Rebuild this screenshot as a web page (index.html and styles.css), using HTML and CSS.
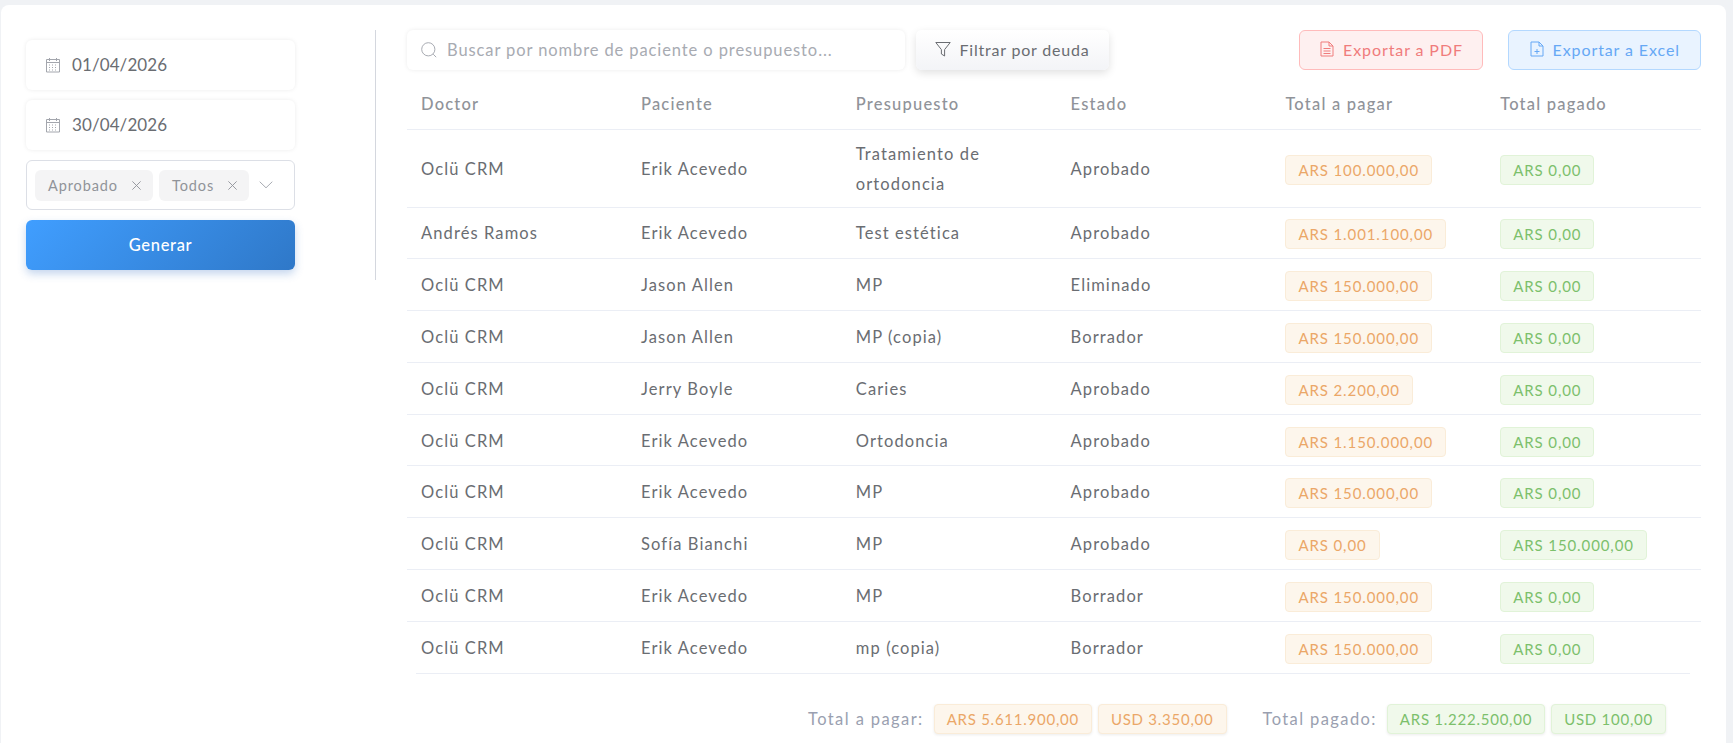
FILE: index.html
```html
<!DOCTYPE html>
<html lang="es">
<head>
    <meta charset="UTF-8">
    <meta name="viewport" content="width=device-width, initial-scale=1.0">
    <title>Reporte de presupuestos</title>
    <link rel="stylesheet" href="styles.css">
</head>
<body>

    <div class="card">
        <aside class="filters">
            <div class="date-input">
                <svg class="icon" viewBox="0 0 16 16"><path d="M1.5 2.5h13v12.5h-13zM1.5 5.5h13M4.5 1v3M11.5 1v3"/><path class="dots" d="M4 8h2M7 8h2M10 8h2M4 10.5h2M7 10.5h2M10 10.5h2M4 13h2M7 13h2M10 13h2"/></svg>
                <span>01/04/2026</span>
            </div>
            <div class="date-input">
                <svg class="icon" viewBox="0 0 16 16"><path d="M1.5 2.5h13v12.5h-13zM1.5 5.5h13M4.5 1v3M11.5 1v3"/><path class="dots" d="M4 8h2M7 8h2M10 8h2M4 10.5h2M7 10.5h2M10 10.5h2M4 13h2M7 13h2M10 13h2"/></svg>
                <span>30/04/2026</span>
            </div>
            <div class="multi-select">
                <span class="chip chip-first">Aprobado <svg class="chip-x" viewBox="0 0 12 12"><path d="M1.5 1.5l9 9M10.5 1.5l-9 9"/></svg></span>
                <span class="chip chip-second">Todos <svg class="chip-x" viewBox="0 0 12 12"><path d="M1.5 1.5l9 9M10.5 1.5l-9 9"/></svg></span>
                <svg class="chevron" viewBox="0 0 14 8"><path d="M.7.7L7 6.8 13.3.7"/></svg>
            </div>
            <button class="btn-generate">Generar</button>
        </aside>

        <div class="divider"></div>

        <main class="report">
            <div class="toolbar">
                <div class="search">
                    <svg class="icon" viewBox="0 0 16 16"><circle cx="7.3" cy="7.3" r="6.6"/><path d="M12.2 12.2l3 3"/></svg>
                    <span>Buscar por nombre de paciente o presupuesto...</span>
                </div>
                <button class="btn-filter">
                    <svg class="icon" viewBox="0 0 16 16"><path d="M.8 1.5h14.4L9.6 8.6V15L6.4 13V8.6z"/></svg>
                    Filtrar por deuda
                </button>
                <button class="btn-export btn-pdf">
                    <svg class="icon" viewBox="0 0 14 16"><path d="M1 1h8l4 4v10H1zM9 1v4h4M3.5 7.5h7M3.5 10h7M3.5 12.5h7"/></svg>
                    Exportar a PDF
                </button>
                <button class="btn-export btn-excel">
                    <svg class="icon" viewBox="0 0 14 16"><path d="M1 1h8l4 4v10H1zM9 1v4h4M7 8v5M4.5 10.5h5"/></svg>
                    Exportar a Excel
                </button>
            </div>

            <table class="budget-table">
                <colgroup>
                    <col class="col-doctor"><col class="col-std"><col class="col-std"><col class="col-std"><col class="col-std"><col class="col-std">
                </colgroup>
                <thead>
                    <tr>
                        <th>Doctor</th><th>Paciente</th><th>Presupuesto</th><th>Estado</th><th>Total a pagar</th><th>Total pagado</th>
                    </tr>
                </thead>
                <tbody>
                    <tr class="row-tall">
                        <td>Oclü CRM</td><td>Erik Acevedo</td><td>Tratamiento de ortodoncia</td><td>Aprobado</td>
                        <td><span class="tag tag-due">ARS 100.000,00</span></td><td><span class="tag tag-paid">ARS 0,00</span></td>
                    </tr>
                    <tr>
                        <td>Andrés Ramos</td><td>Erik Acevedo</td><td>Test estética</td><td>Aprobado</td>
                        <td><span class="tag tag-due">ARS 1.001.100,00</span></td><td><span class="tag tag-paid">ARS 0,00</span></td>
                    </tr>
                    <tr>
                        <td>Oclü CRM</td><td>Jason Allen</td><td>MP</td><td>Eliminado</td>
                        <td><span class="tag tag-due">ARS 150.000,00</span></td><td><span class="tag tag-paid">ARS 0,00</span></td>
                    </tr>
                    <tr>
                        <td>Oclü CRM</td><td>Jason Allen</td><td>MP (copia)</td><td>Borrador</td>
                        <td><span class="tag tag-due">ARS 150.000,00</span></td><td><span class="tag tag-paid">ARS 0,00</span></td>
                    </tr>
                    <tr>
                        <td>Oclü CRM</td><td>Jerry Boyle</td><td>Caries</td><td>Aprobado</td>
                        <td><span class="tag tag-due">ARS 2.200,00</span></td><td><span class="tag tag-paid">ARS 0,00</span></td>
                    </tr>
                    <tr>
                        <td>Oclü CRM</td><td>Erik Acevedo</td><td>Ortodoncia</td><td>Aprobado</td>
                        <td><span class="tag tag-due">ARS 1.150.000,00</span></td><td><span class="tag tag-paid">ARS 0,00</span></td>
                    </tr>
                    <tr>
                        <td>Oclü CRM</td><td>Erik Acevedo</td><td>MP</td><td>Aprobado</td>
                        <td><span class="tag tag-due">ARS 150.000,00</span></td><td><span class="tag tag-paid">ARS 0,00</span></td>
                    </tr>
                    <tr>
                        <td>Oclü CRM</td><td>Sofía Bianchi</td><td>MP</td><td>Aprobado</td>
                        <td><span class="tag tag-due">ARS 0,00</span></td><td><span class="tag tag-paid">ARS 150.000,00</span></td>
                    </tr>
                    <tr>
                        <td>Oclü CRM</td><td>Erik Acevedo</td><td>MP</td><td>Borrador</td>
                        <td><span class="tag tag-due">ARS 150.000,00</span></td><td><span class="tag tag-paid">ARS 0,00</span></td>
                    </tr>
                    <tr class="row-last">
                        <td>Oclü CRM</td><td>Erik Acevedo</td><td>mp (copia)</td><td>Borrador</td>
                        <td><span class="tag tag-due">ARS 150.000,00</span></td><td><span class="tag tag-paid">ARS 0,00</span></td>
                    </tr>
                </tbody>
            </table>
            <div class="table-end"></div>

            <div class="totals">
                <span class="totals-label">Total a pagar:</span>
                <span class="tag tag-due tag-raised">ARS 5.611.900,00</span>
                <span class="tag tag-due tag-raised">USD 3.350,00</span>
                <span class="totals-label totals-second">Total pagado:</span>
                <span class="tag tag-paid tag-raised">ARS 1.222.500,00</span>
                <span class="tag tag-paid tag-raised">USD 100,00</span>
            </div>
        </main>
    </div>

</body>
</html>
```

FILE: styles.css
```css
* {
    box-sizing: border-box;
}
html, body {
    height: 100%;
}
body {
    font-family: Lato, "Open Sans", sans-serif;
    font-size: 16.5px;
    color: #6a6d72;
    background-color: #f0f2f5;
    margin: 0;
    padding: 5px 7px 0 1px;
    overflow: hidden;
}
button {
    font-family: inherit;
    cursor: pointer;
}
.card {
    display: flex;
    align-items: flex-start;
    height: 760px;
    padding: 25px 25px 0;
    background: #fff;
    border-radius: 8px;
    letter-spacing: 1.1px;
}
.icon {
    flex: none;
    width: 16px;
    height: 16px;
    fill: none;
    stroke: currentColor;
    stroke-width: 1;
}

/* left column */
.filters {
    flex: none;
    display: flex;
    flex-direction: column;
    gap: 10px;
    width: 269px;
    margin-top: 10px;
}
.date-input {
    display: flex;
    align-items: center;
    gap: 11px;
    height: 50px;
    padding: 0 19px;
    border-radius: 6px;
    box-shadow: 0 0 4px rgba(0, 0, 0, 0.08);
    font-size: 17px;
    letter-spacing: 0.1px;
}
.date-input span {
    margin-bottom: 1px;
}
.date-input .icon {
    color: #a3a6ad;
}
.dots {
    stroke-width: 1;
    stroke-dasharray: 1 1;
}
.multi-select {
    display: flex;
    align-items: center;
    height: 50px;
    padding: 0 8px;
    border: 1px solid #dcdfe6;
    border-radius: 6px;
    font-size: 14.5px;
    letter-spacing: 0.9px;
    color: #909399;
}
.chip {
    display: flex;
    align-items: center;
    justify-content: space-between;
    height: 31px;
    padding: 0 11px 0 13px;
    background: #f4f4f5;
    border-radius: 6px;
}
.chip-first {
    width: 118px;
}
.chip-second {
    width: 90px;
    margin-left: 6px;
}
.chip-x {
    width: 11px;
    height: 11px;
    fill: none;
    stroke: #909399;
    stroke-width: 1;
}
.chevron {
    width: 14px;
    height: 8px;
    margin-left: 10px;
    fill: none;
    stroke: #a8abb2;
    stroke-width: 1;
}
.btn-generate {
    height: 50px;
    border: none;
    border-radius: 6px;
    background: linear-gradient(135deg, #409eff, #2f78c8);
    box-shadow: 0 4px 8px rgba(64, 120, 200, 0.3);
    color: #fff;
    font-size: 16.5px;
    font-weight: 500;
    letter-spacing: 0.7px;
}
.divider {
    flex: none;
    width: 1px;
    height: 250px;
    margin: 0 31px 0 80px;
    background: #d4d7de;
}

/* toolbar */
.report {
    flex: 1;
    min-width: 0;
}
.toolbar {
    display: flex;
    align-items: stretch;
    height: 40px;
}
.search {
    display: flex;
    align-items: center;
    gap: 10px;
    width: 498px;
    padding: 0 14px;
    border-radius: 6px;
    box-shadow: 0 0 4px rgba(0, 0, 0, 0.08);
    color: #a8abb2;
    font-size: 16.5px;
    letter-spacing: 0.9px;
}
.btn-filter {
    display: flex;
    align-items: center;
    justify-content: center;
    gap: 8px;
    width: 193px;
    margin-left: 11px;
    padding-bottom: 3px;
    border: none;
    border-radius: 6px;
    background: linear-gradient(180deg, #fff, #f3f4f7);
    box-shadow: 0 3px 8px rgba(0, 0, 0, 0.12);
    color: #6a6d72;
    font-size: 16px;
    letter-spacing: 0.8px;
}
.btn-export {
    display: flex;
    align-items: center;
    justify-content: center;
    gap: 8px;
    padding-bottom: 3px;
    border-radius: 6px;
    border: 1px solid;
    font-size: 16px;
    letter-spacing: 0.9px;
}
.btn-pdf {
    width: 184px;
    margin-left: 190px;
    background: #fef0f0;
    border-color: #fbb;
    color: #f07c7c;
}
.btn-excel {
    width: 193.5px;
    margin-left: 24.5px;
    background: #e9f3ff;
    border-color: #b3d8ff;
    color: #66a8f5;
}

/* table */
.budget-table {
    width: 100%;
    margin-top: 6px;
    border-collapse: collapse;
    table-layout: fixed;
}
.col-doctor {
    width: 220px;
}
.budget-table th {
    height: 53.5px;
    padding: 2px 14px 0;
    border-bottom: 1px solid #ebeef5;
    color: #909399;
    font-weight: 500;
    letter-spacing: 1.2px;
    text-align: left;
}
.budget-table td {
    height: 51.8px;
    padding: 1px 14px 0;
    border-bottom: 1px solid #ebeef5;
    line-height: 30px;
}
.budget-table .row-tall td {
    height: 77.5px;
}
.budget-table .row-last td {
    border-bottom: none;
}
.table-end {
    height: 1px;
    margin: 0 11px 0 9px;
    background: #ebeef5;
}
.tag {
    display: inline-block;
    height: 30px;
    padding: 0 12px;
    border: 1px solid;
    border-radius: 4px;
    font-size: 15px;
    letter-spacing: 0.9px;
    line-height: 28px;
    vertical-align: middle;
}
.tag-due {
    background: #fdf6ec;
    border-color: #faecd8;
    color: #eba768;
}
.tag-paid {
    background: #f0f9eb;
    border-color: #e1f3d8;
    color: #7cc06b;
}
.tag-raised {
    box-shadow: 0 1px 3px rgba(0, 0, 0, 0.08);
    letter-spacing: 0.75px;
}

/* totals */
.totals {
    display: flex;
    align-items: center;
    gap: 6px;
    margin: 30px 35px 0 0;
    justify-content: flex-end;
}
.totals-label {
    margin-right: 4px;
    letter-spacing: 1.4px;
    color: #9a9fb0;
}
.totals-second {
    margin-left: 30px;
}
```
